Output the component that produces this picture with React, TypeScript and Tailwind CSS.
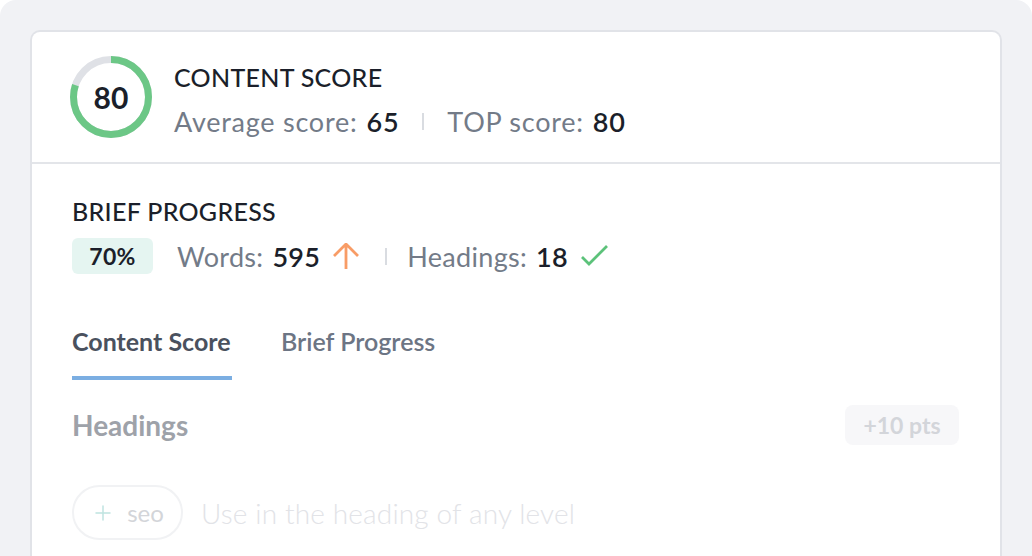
import { Plus } from 'lucide-react';

function ScoreRing({ value }: { value: number }) {
    const r = 37.5;
    const c = 2 * Math.PI * r;
    const filled = (value / 100) * c;

    return (
        <div className="relative h-[82px] w-[82px] shrink-0">
            <svg width="82" height="82" viewBox="0 0 82 82" className="-rotate-90">
                <circle cx="41" cy="41" r={r} fill="none" stroke="#dfe1e6" strokeWidth="7" />
                <circle
                    cx="41"
                    cy="41"
                    r={r}
                    fill="none"
                    stroke="#6cc786"
                    strokeWidth="7"
                    strokeDasharray={`${filled} ${c}`}
                />
            </svg>
            <span className="absolute inset-0 flex items-center justify-center text-[30px] font-bold text-[#1b1f2a]">
                {value}
            </span>
        </div>
    );
}

function Divider({ className = '' }: { className?: string }) {
    return <span className={`h-[17px] w-[2px] bg-[#d9dce1] ${className}`} />;
}

export default function App() {
    return (
        <div className="h-[556px] w-[1032px] overflow-hidden bg-white font-['Lato',sans-serif]">
            <div className="h-full rounded-t-[16px] bg-[#f1f2f5] px-[30px] pt-[30px]">
                <div className="h-full rounded-t-[10px] border-2 border-b-0 border-[#e1e3e8] bg-white">
                    {/* score header */}
                    <div className="flex items-center gap-[22px] border-b-2 border-[#e3e5e9] py-6 pl-[38px] pr-10">
                        <ScoreRing value={80} />
                        <div className="flex flex-col gap-[18px] pt-[5px]">
                            <h2 className="text-[25px] leading-none font-medium tracking-[0.3px] text-[#1b1f2a]">
                                CONTENT SCORE
                            </h2>
                            <div className="flex items-center text-[27px] leading-none tracking-[0.75px] text-[#737b88]">
                                <span>Average score:</span>
                                <span className="ml-[9px] font-semibold text-[#1b1f2a]">65</span>
                                <Divider className="mx-[23px]" />
                                <span>TOP score:</span>
                                <span className="ml-[9px] font-semibold text-[#1b1f2a]">80</span>
                            </div>
                        </div>
                    </div>

                    <div className="px-10 pt-[35px]">
                        {/* brief progress */}
                        <h3 className="text-[25px] leading-none font-medium tracking-[0.3px] text-[#1b1f2a]">
                            BRIEF PROGRESS
                        </h3>
                        <div className="mt-[14px] flex items-center text-[27px] leading-none tracking-[0.3px] text-[#737b88]">
                            <span className="flex h-[36px] w-[81px] items-center justify-center rounded-[6px] bg-[#e5f5f1] text-[23px] font-bold text-[#1b1f2a]">
                                70%
                            </span>
                            <span className="ml-[24px]">Words:</span>
                            <span className="ml-[9px] font-semibold text-[#1b1f2a]">595</span>
                            <svg width="26" height="26" viewBox="0 0 26 26" className="ml-[13px]" fill="none" stroke="#f89c66" strokeWidth="2.8">
                                <path d="M1 13 13 1 25 13M13 1v25" />
                            </svg>
                            <Divider className="ml-[26px] mr-[20px]" />
                            <span>Headings:</span>
                            <span className="ml-[9px] font-semibold text-[#1b1f2a]">18</span>
                            <svg width="28" height="22" viewBox="0 0 28 22" className="ml-[13px]" fill="none" stroke="#5cc27a" strokeWidth="2.8">
                                <path d="M1 12 8 19 26 1" />
                            </svg>
                        </div>

                        {/* tabs */}
                        <div className="mt-[55px] flex items-start gap-[49px]">
                            <div className="flex flex-col">
                                <span className="text-[25px] leading-none font-bold text-[#4a515e]">Content Score</span>
                                <span className="mt-[22px] h-[4px] w-[160px] bg-[#7baee2]" />
                            </div>
                            <span className="text-[25px] leading-none font-semibold text-[#6c7584]">Brief Progress</span>
                        </div>

                        {/* headings requirement */}
                        <div className="mt-[24px] flex items-center justify-between pr-[1px]">
                            <span className="text-[28px] font-bold text-[#9ea2a9]">Headings</span>
                            <span className="flex h-[40px] w-[114px] items-center justify-center rounded-[8px] bg-[#f7f7f9] text-[23px] font-bold text-[#d3d5da]">
                                +10 pts
                            </span>
                        </div>

                        <div className="mt-[39px] flex items-center gap-[18px]">
                            <span className="flex h-[55px] w-[111px] items-center justify-center gap-[12px] rounded-full border-2 border-[#f1f2f4] text-[24px] text-[#d3d5d9]">
                                <Plus size={24} strokeWidth={1.5} color="#bfe3e0" />
                                seo
                            </span>
                            <span className="text-[28px] font-light tracking-[0.15px] text-[#e2e3e7]">Use in the heading of any level</span>
                        </div>
                    </div>
                </div>
            </div>
        </div>
    );
}
